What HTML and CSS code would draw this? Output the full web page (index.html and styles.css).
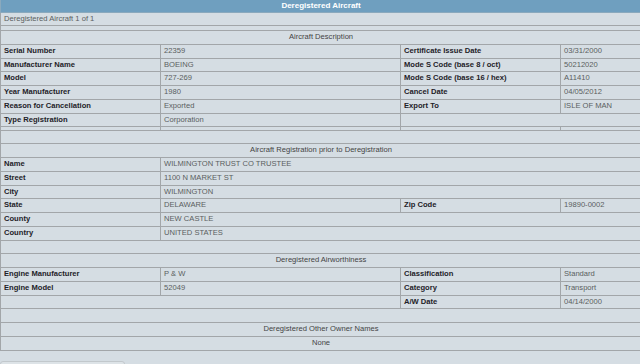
FILE: index.html
```html
<!DOCTYPE html>
<html>
<head>
<meta charset="utf-8">
<title>Deregistered Aircraft</title>
<link rel="stylesheet" href="styles.css">
</head>
<body>
<table class="grid">
  <colgroup>
    <col class="c1"><col class="c2"><col class="c3"><col class="c4">
  </colgroup>
  <tr class="title"><td colspan="4">Deregistered Aircraft</td></tr>
  <tr><td colspan="4" class="val">Deregistered Aircraft 1 of 1</td></tr>
  <tr class="thin wide"><td colspan="4"></td></tr>
  <tr class="sect"><td colspan="4">Aircraft Description</td></tr>
  <tr><td class="lbl">Serial Number</td><td class="val">22359</td><td class="lbl">Certificate Issue Date</td><td class="val">03/31/2000</td></tr>
  <tr><td class="lbl">Manufacturer Name</td><td class="val">BOEING</td><td class="lbl">Mode S Code (base 8 / oct)</td><td class="val">50212020</td></tr>
  <tr><td class="lbl">Model</td><td class="val">727-269</td><td class="lbl">Mode S Code (base 16 / hex)</td><td class="val">A11410</td></tr>
  <tr><td class="lbl">Year Manufacturer</td><td class="val">1980</td><td class="lbl">Cancel Date</td><td class="val">04/05/2012</td></tr>
  <tr><td class="lbl">Reason for Cancellation</td><td class="val">Exported</td><td class="lbl">Export To</td><td class="val">ISLE OF MAN</td></tr>
  <tr><td class="lbl">Type Registration</td><td class="val">Corporation</td><td colspan="2"></td></tr>
  <tr class="thin"><td></td><td></td><td></td><td></td></tr>
  <tr class="empty"><td colspan="4"></td></tr>
  <tr class="sect"><td colspan="4">Aircraft Registration prior to Deregistration</td></tr>
  <tr><td class="lbl">Name</td><td class="val" colspan="3">WILMINGTON TRUST CO TRUSTEE</td></tr>
  <tr><td class="lbl">Street</td><td class="val" colspan="3">1100 N MARKET ST</td></tr>
  <tr><td class="lbl">City</td><td class="val" colspan="3">WILMINGTON</td></tr>
  <tr><td class="lbl">State</td><td class="val">DELAWARE</td><td class="lbl">Zip Code</td><td class="val">19890-0002</td></tr>
  <tr><td class="lbl">County</td><td class="val" colspan="3">NEW CASTLE</td></tr>
  <tr><td class="lbl">Country</td><td class="val" colspan="3">UNITED STATES</td></tr>
  <tr class="empty"><td colspan="4"></td></tr>
  <tr class="sect"><td colspan="4">Deregistered Airworthiness</td></tr>
  <tr><td class="lbl">Engine Manufacturer</td><td class="val">P &amp; W</td><td class="lbl">Classification</td><td class="val">Standard</td></tr>
  <tr><td class="lbl">Engine Model</td><td class="val">52049</td><td class="lbl">Category</td><td class="val">Transport</td></tr>
  <tr><td colspan="2"></td><td class="lbl">A/W Date</td><td class="val">04/14/2000</td></tr>
  <tr class="empty"><td colspan="4"></td></tr>
  <tr class="sect"><td colspan="4">Deregistered Other Owner Names</td></tr>
  <tr class="sect"><td colspan="4">None</td></tr>
</table>
<div class="footer">
  <div class="box"></div>
</div>
</body>
</html>
```

FILE: styles.css
```css
html, body {
  margin: 0;
  padding: 0;
  background: #d5dde3;
  overflow: hidden;
}

body {
  width: 640px;
  height: 364px;
  font-family: "Liberation Sans", Arial, sans-serif;
}

.grid {
  width: 641px;
  border-collapse: collapse;
  table-layout: fixed;
  background: #d5dde3;
}

.c1 { width: 160px; }
.c2 { width: 240px; }
.c3 { width: 160px; }
.c4 { width: 81px; }

.grid td {
  border: 1px solid #a2a6a9;
  height: 12.75px;
  padding: 0 3px;
  font-size: 7.6px;
  line-height: 12.75px;
  white-space: nowrap;
  overflow: hidden;
  color: #555;
}

.grid .title td {
  background: #6f9fbf;
  color: #fff;
  font-weight: bold;
  font-size: 8px;
  text-align: center;
  height: 11.5px;
  line-height: 11.5px;
  border-top: none;
  border-color: #8aa9bd;
}

.grid .thin td {
  height: 2.4px;
  line-height: 2px;
  font-size: 0;
}

.grid .thin.wide td {
  height: 3.8px;
}

.grid .sect td {
  text-align: center;
  color: #444;
}

.grid td.lbl {
  font-weight: bold;
  color: #1e2228;
}

.grid td.val {
  color: #5a5d60;
}

.footer {
  padding: 10px 0 0 0;
}

.box {
  width: 123px;
  height: 20px;
  border: 1px solid #c2c8cc;
  border-radius: 3px;
  background: #dde3e7;
}
```
